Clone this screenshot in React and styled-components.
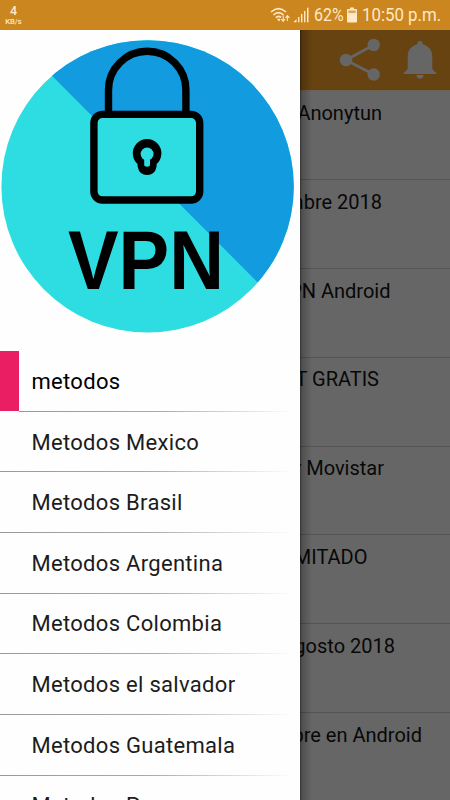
import styled, { createGlobalStyle } from 'styled-components';

const GlobalStyle = createGlobalStyle`
    body
    {
        margin:0;
        background-color:#666;
        font-family:Roboto, sans-serif;
    }
`
const Screen = styled.div`
    width:450px;
    height:800px;
    display:flex;
    flex-direction:column;
    overflow:hidden;
`
const StatusBar = styled.header`
    height:30px;
    flex-shrink:0;
    padding:0 8px 0 4px;
    box-sizing:border-box;
    display:flex;
    justify-content:space-between;
    align-items:center;
    background-color:#cb861f;
    color:#ffe9c6;
`
const Speed = styled.div`
    width:19px;
    display:flex;
    flex-direction:column;
    align-items:center;
    font-size:12.5px;
    font-weight:500;
`
const SpeedValue = styled.span`
    line-height:15px;
    margin-top:-1px;
`
const SpeedUnit = styled.span`
    font-size:7.5px;
    line-height:9px;
    margin-top:-1px;
`
const StatusIcons = styled.div`
    display:flex;
    align-items:center;
`
const StatusText = styled.span`
    width:${props=>props.$width}px;
    font-size:18.5px;
    line-height:30px;
    white-space:nowrap;
    transform:scaleX(${props=>props.$stretch});
    transform-origin:left center;
`
const Body = styled.div`
    position:relative;
    flex:1;
    min-height:0;
`
const AppBar = styled.div`
    height:59.5px;
    padding-right:13px;
    display:flex;
    justify-content:flex-end;
    align-items:center;
    gap:22px;
    background-color:#664310;
    border-bottom:2px solid #6b6353;
`
const Post = styled.div`
    height:88.8px;
    box-sizing:border-box;
    padding-top:8.5px;
    border-bottom:1px solid #545454;
    background-color:#666;
`
const PostTitle = styled.div`
    width:${props=>props.$end}px;
    text-align:right;
    font-size:20px;
    line-height:26px;
    white-space:nowrap;
    color:#080808;
`
const Drawer = styled.nav`
    position:absolute;
    top:0;
    left:0;
    bottom:0;
    width:300px;
    overflow:hidden;
    background-color:#fefefe;
`
const DrawerShadow = styled.div`
    position:absolute;
    top:0;
    left:300px;
    bottom:0;
    width:12px;
    background:linear-gradient(to right, rgba(0,0,0,0.5), rgba(0,0,0,0.22) 2px, rgba(0,0,0,0));
`
const Logo = styled.svg`
    display:block;
    width:300px;
    height:320.5px;
`
const MenuItem = styled.div`
    position:relative;
    height:60.65px;
    display:flex;
    align-items:stretch;
    &::after
    {
        content:'';
        position:absolute;
        left:${props=>props.$active?19:0}px;
        right:0;
        bottom:-0.6px;
        height:1px;
        background:linear-gradient(to right, #999, #aaa 50%, #fefefe 98%);
    }
`
const Marker = styled.span`
    width:19px;
    background-color:${props=>props.$active?'#e91e63':'transparent'};
`
const MenuLabel = styled.span`
    padding:1.4px 0 0 12.5px;
    font-size:22px;
    line-height:59px;
    letter-spacing:0.3px;
    white-space:nowrap;
    color:${props=>props.$active?'#000':'#1c1c1c'};
`

const posts = [
    { title:'Anonytun', end:382 },
    { title:'mbre 2018', end:382 },
    { title:'PN Android', end:390.5 },
    { title:'T GRATIS', end:379 },
    { title:'r Movistar', end:384 },
    { title:'MITADO', end:367.5 },
    { title:'gosto 2018', end:395 },
    { title:'bre en Android', end:422 },
]
const menu = [
    'metodos',
    'Metodos Mexico',
    'Metodos Brasil',
    'Metodos Argentina',
    'Metodos Colombia',
    'Metodos el salvador',
    'Metodos Guatemala',
    'Metodos Peru',
]

const WifiSvg = styled.svg`
    margin-right:2px;
`
const SignalSvg = styled.svg`
    margin-right:4px;
`
const BatterySvg = styled.svg`
    margin-right:5px;
`

function WifiIcon()
{
    return(
        <WifiSvg width="21" height="16" viewBox="0 0 21 16" fill="none" stroke="#ffe9c6" strokeWidth="1.6">
            <path d="M1 5Q8.5-1.6 16 5M3.4 8Q8.5 3.4 13.6 8M5.8 10.7Q8.5 8.2 11 10.4"/>
            <path d="M7 12L9 14.5L10.5 12.5L9 11.5Z" fill="#ffe9c6" stroke="none"/>
            <path d="M13.2 8.5V14M11.2 12L13.2 14.3L15 12M17.4 14V8.8M15.5 10.8L17.4 8.6L19.5 10.8" strokeWidth="1.1"/>
        </WifiSvg>
    )
}

function SignalIcon()
{
    return(
        <SignalSvg width="17" height="16" viewBox="0 0 17 16" fill="#ffe9c6">
            <path d="M0.5 15.3L3.5 12V15.3Z"/>
            <rect x="5" y="10" width="1.4" height="5.3"/>
            <rect x="8" y="7" width="1.4" height="8.3"/>
            <rect x="11" y="4" width="1.4" height="11.3"/>
            <rect x="14" y="0.7" width="1.5" height="14.6"/>
        </SignalSvg>
    )
}

function BatteryIcon()
{
    return(
        <BatterySvg width="10" height="16" viewBox="0 0 10 16" fill="#ffe9c6">
            <rect x="3" y="0.5" width="4" height="2"/>
            <rect x="0" y="2" width="10" height="13.5" rx="0.8"/>
            <rect x="1.3" y="3.5" width="7.4" height="2.6" fill="#daa75c"/>
        </BatterySvg>
    )
}

function ShareIcon()
{
    return(
        <svg width="42" height="44" viewBox="0 0 42 44" fill="#666" stroke="#666">
            <path d="M34.7 7L7 22L34.7 36.5" fill="none" strokeWidth="2.8"/>
            <circle cx="34.7" cy="7" r="6.2" stroke="none"/>
            <circle cx="7" cy="22" r="6.3" stroke="none"/>
            <circle cx="34.7" cy="36.5" r="6.2" stroke="none"/>
        </svg>
    )
}

function BellIcon()
{
    return(
        <svg width="34" height="40" viewBox="0 0 34 40" fill="#666">
            <path d="M17 1C15 1 14.2 2.4 14.2 4.3C8 5.8 4.7 10.4 4.7 16.5V27.5C4.7 29.5 3 31.5 0.8 32.6V34H33.2V32.6C31 31.5 29.3 29.5 29.3 27.5V16.5C29.3 10.4 26 5.8 19.8 4.3C19.8 2.4 19 1 17 1Z"/>
            <path d="M13.3 35H20.7C20.4 37.4 19 38.7 17 38.7S13.6 37.4 13.3 35Z"/>
        </svg>
    )
}

function VpnLogo()
{
    return(
        <Logo viewBox="0 30 300 320.5">
            <defs>
                <clipPath id="disc"><circle cx="147.6" cy="186.4" r="146.2"/></clipPath>
            </defs>
            <circle cx="147.6" cy="186.4" r="146.2" fill="#2edde1"/>
            <path d="M0 23.5L310 335V0H0Z" fill="#139bdf" clipPath="url(#disc)"/>
            <path d="M108.5 114V90A38.7 38.7 0 0 1 185.9 90V114" fill="none" stroke="#000" strokeWidth="7.4"/>
            <rect x="93.9" y="114.4" width="105.8" height="85.6" rx="8.5" fill="#2edde1" stroke="#000" strokeWidth="7.4"/>
            <path d="M141 162A10.6 10.6 0 1 1 153.2 162L152.8 166.5Q151.8 171.2 147.1 171.2T141.4 166.5Z" fill="#000" stroke="#000" strokeWidth="7.4" strokeLinejoin="round"/>
            <circle cx="147.1" cy="154" r="6.5" fill="#2edde1"/>
            <path d="M144.2 156H150V165.5Q147.1 168 144.2 165.5Z" fill="#2edde1"/>
            <text x="68" y="288.5" textLength="156" lengthAdjust="spacingAndGlyphs" fontFamily="Liberation Sans, sans-serif" fontWeight="700" fontSize="83">VPN</text>
        </Logo>
    )
}

export default function App()
{
    return(
        <Screen>
            <GlobalStyle/>
            <StatusBar>
                <Speed>
                    <SpeedValue>4</SpeedValue>
                    <SpeedUnit>KB/s</SpeedUnit>
                </Speed>
                <StatusIcons>
                    <WifiIcon/>
                    <SignalIcon/>
                    <StatusText $width={33} $stretch={0.86}>62%</StatusText>
                    <BatteryIcon/>
                    <StatusText $width={80} $stretch={0.91}>10:50 p.m.</StatusText>
                </StatusIcons>
            </StatusBar>
            <Body>
                <AppBar>
                    <ShareIcon/>
                    <BellIcon/>
                </AppBar>
                {posts.map((post) => (
                    <Post key={post.title}>
                        <PostTitle $end={post.end}>{post.title}</PostTitle>
                    </Post>
                ))}
                <DrawerShadow/>
                <Drawer>
                    <VpnLogo/>
                    {menu.map((label,index) => (
                        <MenuItem key={label} $active={index===0}>
                            <Marker $active={index===0}/>
                            <MenuLabel $active={index===0}>{label}</MenuLabel>
                        </MenuItem>
                    ))}
                </Drawer>
            </Body>
        </Screen>
    )
}
